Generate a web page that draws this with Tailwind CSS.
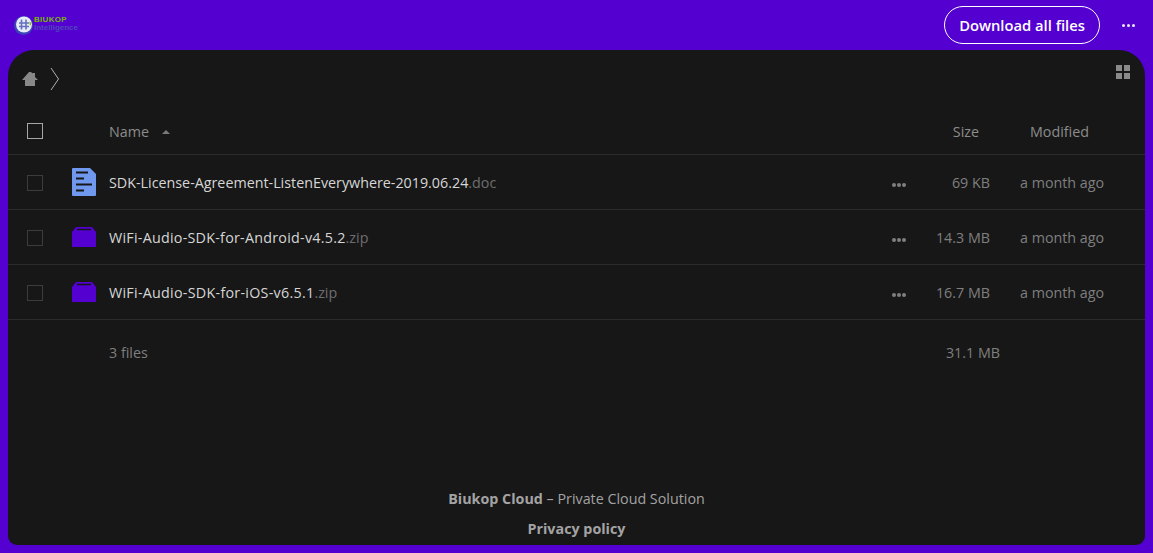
<!DOCTYPE html>
<html lang="en">
<head>
    <meta charset="UTF-8">
    <title>Biukop Cloud</title>
    <script src="https://cdn.jsdelivr.net/npm/@tailwindcss/browser@4"></script>
</head>
<body class="bg-[#5300d0] h-[553px] overflow-hidden font-['Open_Sans','Noto_Sans',sans-serif] text-[14.3px]">
    <!-- Header -->
    <header class="h-[50px] flex items-center pl-[14px] pr-[17px]">
        <div class="flex items-center w-[64px] h-[20px]">
            <svg width="20" height="20" viewBox="0 0 20 20" class="shrink-0">
                <circle cx="9.5" cy="10.5" r="9.5" fill="#3c45b8"/>
                <circle cx="10" cy="9.5" r="8" fill="#e8ebf6"/>
                <path d="M7.5 4.5v10M12 4.5v10M5 8h10M5 11.5h10" stroke="#6470c0" stroke-width="1.6" fill="none"/>
                <path d="M15.5 6.5l1.5 1v3l-1.5-1z" fill="#7fc400"/>
            </svg>
            <div class="flex flex-col font-['Liberation_Sans',sans-serif] font-bold leading-[8px] mt-[-3px]">
                <span class="text-[8px] text-[#7ab80a] tracking-[0.3px]">BIUKOP</span>
                <span class="text-[8px] text-[#5048b8]">Intelligence</span>
            </div>
        </div>
        <div class="flex-1"></div>
        <button class="h-[38px] w-[156px] rounded-full border border-white text-white font-semibold text-[14.75px] flex items-center justify-center">Download all files</button>
        <div class="ml-[20px] w-[16px] flex gap-[2px] justify-center">
            <span class="w-[3px] h-[3px] rounded-full bg-white/90"></span>
            <span class="w-[3px] h-[3px] rounded-full bg-white/90"></span>
            <span class="w-[3px] h-[3px] rounded-full bg-white/90"></span>
        </div>
    </header>

    <!-- Main -->
    <main class="mx-[8px] h-[495px] bg-[#171717] rounded-t-[26px] rounded-b-[9px] flex flex-col">
        <!-- Breadcrumb -->
        <div class="h-[59px] flex items-center pl-[14px] pr-[15px] shrink-0">
            <svg width="16" height="16" viewBox="0 0 16 16" class="shrink-0 mt-[-1px]">
                <path d="M7 1 H9 L10.5 2.5 V2 H13 V6 L16 9 H13 V15 H3 V9 H0 Z" fill="#888888"/>
            </svg>
            <svg width="10" height="24" viewBox="0 0 10 24" class="ml-[12px] shrink-0 mt-[-2px]">
                <path d="M1 1 L8.5 12 L1 23" stroke="#b0b0b0" stroke-width="1" fill="none"/>
            </svg>
            <div class="flex-1"></div>
            <div class="grid grid-cols-2 gap-[2px] w-[14px] h-[14px] mt-[-16px]">
                <span class="bg-[#8a8a8a]"></span><span class="bg-[#8a8a8a]"></span>
                <span class="bg-[#8a8a8a]"></span><span class="bg-[#8a8a8a]"></span>
            </div>
        </div>

        <!-- Table head -->
        <div class="h-[46px] flex items-center border-b border-[#2b2b2b] text-[#8c8c8c] shrink-0">
            <div class="w-[101px] pl-[19px] shrink-0">
                <div class="w-[16px] h-[16px] border border-[#a6a6a6] mt-[-1px]"></div>
            </div>
            <div class="flex-1 flex items-center">
                <span>Name</span>
                <span class="ml-[13px] w-0 h-0 border-x-[4px] border-x-transparent border-b-[4px] border-b-[#7a7a7a]"></span>
            </div>
            <div class="w-[72px] text-right mr-[51px]">Size</div>
            <div class="w-[115px] shrink-0">Modified</div>
        </div>

        <!-- Rows -->
        <div class="h-[55px] flex items-center border-b border-[#2b2b2b] shrink-0">
            <div class="w-[64px] pl-[19px] shrink-0">
                <div class="w-[16px] h-[16px] border border-[#3c3c3c] mt-[1px]"></div>
            </div>
            <div class="w-[37px] shrink-0">
                <svg width="24" height="28" viewBox="0 0 24 28">
                    <path d="M0 1 Q0 0 1 0 H18 L24 6 V27 Q24 28 23 28 H1 Q0 28 0 27 Z" fill="#6f98ee"/>
                    <path d="M4 4.5h12M4 10.5h8M4 16.5h16M4 22.5h8" stroke="#171717" stroke-width="2"/>
                </svg>
            </div>
            <div class="flex-1 pt-[2px] text-[#d6d6d6] whitespace-nowrap">SDK-License-Agreement-ListenEverywhere-2019.06.24<span class="text-[#6e6e6e]">.doc</span></div>
            <div class="flex gap-[1px] w-[17px] pl-[2px] mt-[5px] shrink-0">
                <span class="w-[4px] h-[4px] rounded-full bg-[#7f7f7f]"></span>
                <span class="w-[4px] h-[4px] rounded-full bg-[#7f7f7f]"></span>
                <span class="w-[4px] h-[4px] rounded-full bg-[#7f7f7f]"></span>
            </div>
            <div class="w-[83px] pt-[2px] text-right text-[#7f7f7f] shrink-0">69 KB</div>
            <div class="w-[155px] pt-[2px] pl-[30px] text-[#7f7f7f] shrink-0">a month ago</div>
        </div>
        <div class="h-[55px] flex items-center border-b border-[#2b2b2b] shrink-0">
            <div class="w-[64px] pl-[19px] shrink-0">
                <div class="w-[16px] h-[16px] border border-[#3c3c3c] mt-[1px]"></div>
            </div>
            <div class="w-[37px] shrink-0">
                <svg width="24" height="20" viewBox="0 0 24 20">
                    <path d="M0 5 L4 0 H20 L24 5 V20 H0 Z" fill="#5300d0"/>
                    <path d="M5 2.5h14" stroke="#171717" stroke-width="1.5"/>
                </svg>
            </div>
            <div class="flex-1 pt-[2px] text-[#d6d6d6] whitespace-nowrap"><span class="tracking-[0.25px]">WiFi-Audio-SDK-for-Android-v4.5.2</span><span class="text-[#6e6e6e]">.zip</span></div>
            <div class="flex gap-[1px] w-[17px] pl-[2px] mt-[5px] shrink-0">
                <span class="w-[4px] h-[4px] rounded-full bg-[#7f7f7f]"></span>
                <span class="w-[4px] h-[4px] rounded-full bg-[#7f7f7f]"></span>
                <span class="w-[4px] h-[4px] rounded-full bg-[#7f7f7f]"></span>
            </div>
            <div class="w-[83px] pt-[2px] text-right text-[#7f7f7f] shrink-0">14.3 MB</div>
            <div class="w-[155px] pt-[2px] pl-[30px] text-[#7f7f7f] shrink-0">a month ago</div>
        </div>
        <div class="h-[55px] flex items-center border-b border-[#2b2b2b] shrink-0">
            <div class="w-[64px] pl-[19px] shrink-0">
                <div class="w-[16px] h-[16px] border border-[#3c3c3c] mt-[1px]"></div>
            </div>
            <div class="w-[37px] shrink-0">
                <svg width="24" height="20" viewBox="0 0 24 20">
                    <path d="M0 5 L4 0 H20 L24 5 V20 H0 Z" fill="#5300d0"/>
                    <path d="M5 2.5h14" stroke="#171717" stroke-width="1.5"/>
                </svg>
            </div>
            <div class="flex-1 pt-[2px] text-[#d6d6d6] whitespace-nowrap"><span class="tracking-[0.27px]">WiFi-Audio-SDK-for-iOS-v6.5.1</span><span class="text-[#6e6e6e]">.zip</span></div>
            <div class="flex gap-[1px] w-[17px] pl-[2px] mt-[5px] shrink-0">
                <span class="w-[4px] h-[4px] rounded-full bg-[#7f7f7f]"></span>
                <span class="w-[4px] h-[4px] rounded-full bg-[#7f7f7f]"></span>
                <span class="w-[4px] h-[4px] rounded-full bg-[#7f7f7f]"></span>
            </div>
            <div class="w-[83px] pt-[2px] text-right text-[#7f7f7f] shrink-0">16.7 MB</div>
            <div class="w-[155px] pt-[2px] pl-[30px] text-[#7f7f7f] shrink-0">a month ago</div>
        </div>

        <!-- Summary -->
        <div class="h-[65px] flex items-center text-[#7f7f7f] shrink-0">
            <div class="w-[101px] shrink-0"></div>
            <div class="flex-1">3 files</div>
            <div class="w-[290px] shrink-0 text-right pr-[145px]">31.1 MB</div>
        </div>

        <!-- Footer -->
        <footer class="mt-auto pb-[1px] text-center text-[#a3a3a3]">
            <p class="h-[30px] leading-[30px]"><span class="font-bold">Biukop Cloud</span> – Private Cloud Solution</p>
            <p class="h-[30px] leading-[30px] font-bold">Privacy policy</p>
        </footer>
    </main>
</body>
</html>
